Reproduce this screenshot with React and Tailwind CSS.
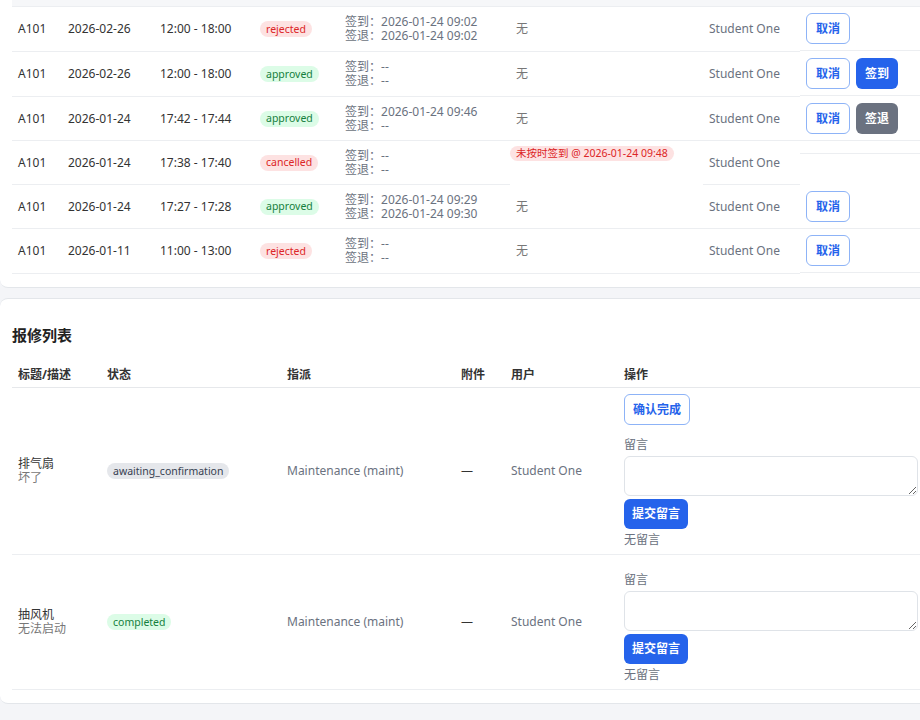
import React from "react";

const cols1 = "grid grid-cols-[50px_92px_100px_85px_171px_193px_97px_1fr]";
const cell = "flex items-center px-1.5 border-b border-[#eceef1]";

function Badge({ kind, children }) {
  const map = {
    red: "bg-[#fde2e2] text-[#dc2626]",
    green: "bg-[#dcfce7] text-[#15803d]",
    gray: "bg-[#e5e7eb] text-[#374151]",
  };
  return (
    <span className={`inline-flex items-center h-[16px] px-1.5 rounded-full text-[10.5px] leading-none ${map[kind]}`}>
      {children}
    </span>
  );
}

function OutlineBtn({ children, className = "" }) {
  return (
    <button className={`h-[31px] px-[9px] rounded-md border border-[#8db3f7] bg-white text-[#2563eb] text-xs font-semibold ${className}`}>
      {children}
    </button>
  );
}

const rows = [
  { date: "2026-02-26", time: "12:00 - 18:00", status: ["red", "rejected"], in: "2026-01-24 09:02", out: "2026-01-24 09:02", remark: null, actions: ["cancel"], h: "h-[45px]" },
  { date: "2026-02-26", time: "12:00 - 18:00", status: ["green", "approved"], in: "--", out: "--", remark: null, actions: ["cancel", "in"], h: "h-[45px]" },
  { date: "2026-01-24", time: "17:42 - 17:44", status: ["green", "approved"], in: "2026-01-24 09:46", out: "--", remark: null, actions: ["cancel", "out"], h: "h-[44px]" },
  { date: "2026-01-24", time: "17:38 - 17:40", status: ["red", "cancelled"], in: "--", out: "--", remark: "未按时签到 @ 2026-01-24 09:48", actions: [], h: "h-[44px]" },
  { date: "2026-01-24", time: "17:27 - 17:28", status: ["green", "approved"], in: "2026-01-24 09:29", out: "2026-01-24 09:30", remark: null, actions: ["cancel"], h: "h-[44px]" },
  { date: "2026-01-11", time: "11:00 - 13:00", status: ["red", "rejected"], in: "--", out: "--", remark: null, actions: ["cancel"], h: "h-[45px]" },
];

function BookingRow({ r }) {
  return (
    <div className={`${cols1} ${r.h}`}>
      <div className={`${cell} text-[#333]`}>A101</div>
      <div className={`${cell} text-[#333]`}>{r.date}</div>
      <div className={`${cell} text-[#333]`}>{r.time}</div>
      <div className={cell}>
        <Badge kind={r.status[0]}>{r.status[1]}</Badge>
      </div>
      <div className={`${cell} flex-col !items-start justify-center text-xs leading-[14px] text-[#6b7280]`}>
        <div>签到：{r.in}</div>
        <div>签退：{r.out}</div>
      </div>
      {r.remark ? (
        <div className="self-start pt-[3px]">
          <span className="inline-flex items-center h-[15px] px-1.5 rounded-full bg-[#fde2e2] text-[#dc2626] text-[10.5px] leading-none">
            {r.remark}
          </span>
        </div>
      ) : (
        <div className={`${cell} text-[#777]`}>无</div>
      )}
      <div className={`${cell} text-[#6b7280]`}>Student One</div>
      <div className="self-start flex gap-1.5 px-1.5 py-1.5 border-b border-[#eceef1]">
        {r.actions.map((a) =>
          a === "cancel" ? (
            <OutlineBtn key={a}>取消</OutlineBtn>
          ) : a === "in" ? (
            <button key={a} className="h-[31px] px-[9px] rounded-md bg-[#2563eb] text-white text-xs font-semibold">签到</button>
          ) : (
            <button key={a} className="h-[31px] px-[9px] rounded-md bg-[#6b7280] text-white text-xs font-semibold">签退</button>
          )
        )}
      </div>
    </div>
  );
}

const cols2 = "grid grid-cols-[89px_180px_174px_50px_113px_1fr]";

function RepairRow({ title, desc, status, confirm }) {
  return (
    <div className={cols2}>
      <div className={`${cell} flex-col !items-start justify-center`}>
        <div className="text-xs leading-[14px] text-[#333]">{title}</div>
        <div className="text-xs leading-[14px] text-[#777]">{desc}</div>
      </div>
      <div className={cell}>
        <Badge kind={status[0]}>{status[1]}</Badge>
      </div>
      <div className={`${cell} text-[#6b7280]`}>Maintenance (maint)</div>
      <div className={`${cell} text-[#333]`}>—</div>
      <div className={`${cell} text-[#6b7280]`}>Student One</div>
      <div className="flex flex-col items-start px-1.5 pt-[6px] pb-[6px] border-b border-[#eceef1]">
        {confirm && <OutlineBtn className="!px-[8px]">确认完成</OutlineBtn>}
        <div className={`${confirm ? "mt-[12px]" : "mt-[11px]"} text-xs leading-4 text-[#6b7280]`}>留言</div>
        <textarea className="mt-[3px] w-[294px] h-[40px] rounded-md border border-[#dfe3e8] bg-white" />
        <button className="mt-[3px] h-[30px] px-[8px] rounded-md bg-[#2563eb] text-white text-xs font-semibold">提交留言</button>
        <div className="mt-[3px] text-xs leading-4 text-[#6b7280]">无留言</div>
      </div>
    </div>
  );
}

export default function App() {
  return (
    <div className="min-h-[720px] bg-[#f4f5f8] overflow-hidden font-['Noto_Sans','Noto_Sans_CJK_SC',sans-serif] text-[12px]">
      <div className="w-[940px] bg-white rounded-b-lg border-b border-[#e3e6ea] px-3 pb-[13px]">
        <div className="h-[7px] bg-[#f6f7f9] border-b border-[#eceef1]" />
        {rows.map((r, i) => (
          <BookingRow key={i} r={r} />
        ))}
      </div>

      <div className="mt-[10px] w-[940px] bg-white rounded-lg border border-[#e3e6ea] border-l-0 px-3 pt-[26px] pb-[13px]">
        <h3 className="text-[15px] leading-5 font-bold text-[#222]">报修列表</h3>
        <div className={`${cols2} mt-[17px] h-[26px] text-xs font-bold text-[#333]`}>
          <div className="flex items-center px-1.5 border-b border-[#e6e8eb]">标题/描述</div>
          <div className="flex items-center px-1.5 border-b border-[#e6e8eb]">状态</div>
          <div className="flex items-center px-1.5 border-b border-[#e6e8eb]">指派</div>
          <div className="flex items-center px-1.5 border-b border-[#e6e8eb]">附件</div>
          <div className="flex items-center px-1.5 border-b border-[#e6e8eb]">用户</div>
          <div className="flex items-center px-1.5 border-b border-[#e6e8eb]">操作</div>
        </div>
        <RepairRow title="排气扇" desc="坏了" status={["gray", "awaiting_confirmation"]} confirm />
        <RepairRow title="抽风机" desc="无法启动" status={["green", "completed"]} />
      </div>
    </div>
  );
}
